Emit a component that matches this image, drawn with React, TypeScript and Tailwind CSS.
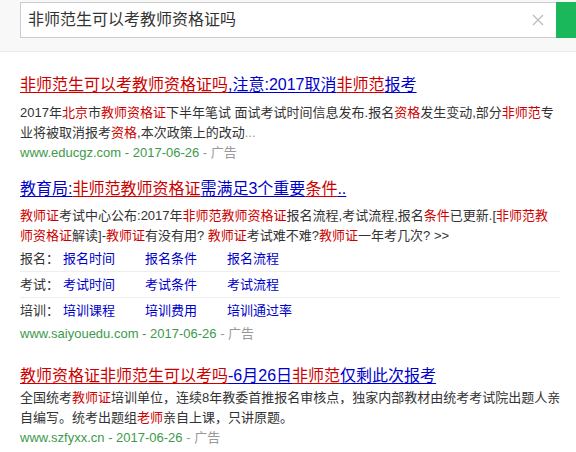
import React from "react";

type Seg = [string, "r" | "b" | "t" | "g"];

const colorOf: Record<Seg[1], string> = {
  r: "text-[#cc0000]",
  b: "text-[#0000cc]",
  t: "text-[#333333]",
  g: "text-[#999999]",
};

function Segs({ segs, underline }: { segs: Seg[]; underline?: boolean }) {
  return (
    <>
      {segs.map(([s, c], i) => (
        <span key={i} className={`${colorOf[c]} ${underline ? "underline underline-offset-2" : ""}`}>
          {s}
        </span>
      ))}
    </>
  );
}

function Cite({ host }: { host: string }) {
  return (
    <div className="text-[13px] leading-5">
      <span className="text-[#3d9a4a]">{host} - 2017-06-26</span>
      <span className="text-[#999999]"> - 广告</span>
    </div>
  );
}

const rows = [
  { label: "报名：", links: ["报名时间", "报名条件", "报名流程"] },
  { label: "考试：", links: ["考试时间", "考试条件", "考试流程"] },
  { label: "培训：", links: ["培训课程", "培训费用", "培训通过率"] },
];

export default function App() {
  return (
    <div
      className="w-[576px] h-[452px] overflow-hidden bg-white"
      style={{ fontFamily: '"Liberation Sans", "Noto Sans CJK SC", sans-serif' }}
    >
      {/* search header */}
      <div className="h-[52px] bg-[#f8f8f8] border-b border-[#ececec] pt-[2px] pl-[20px] flex">
        <div className="w-[540px] h-[36px] bg-white border border-[#cccccc] border-r-0 flex items-center pl-[7px] pr-[12px]">
          <span className="flex-1 text-[16px] text-[#333333] leading-none">非师范生可以考教师资格证吗</span>
          <svg width="12" height="12" viewBox="0 0 12 12">
            <path d="M1 1 L11 11 M11 1 L1 11" stroke="#bbbbbb" strokeWidth="1.2" />
          </svg>
        </div>
        <div className="w-[20px] h-[36px] bg-[#1ab85a]" />
      </div>

      <div className="px-[20px] pt-[22px] w-[581px]">
        {/* result 1 */}
        <div>
          <div className="text-[16px] leading-[22px] whitespace-nowrap">
            <Segs
              underline
              segs={[
                ["非师范生可以考教师资格证吗", "r"],
                [",注意:2017取消", "b"],
                ["非师范", "r"],
                ["报考", "b"],
              ]}
            />
          </div>
          <div className="mt-[7px] text-[13px] leading-5 w-[541px]">
            <Segs
              segs={[
                ["2017年", "t"],
                ["北京", "r"],
                ["市", "t"],
                ["教师资格证", "r"],
                ["下半年笔试 面试考试时间信息发布.报名", "t"],
                ["资格", "r"],
                ["发生变动,部分", "t"],
                ["非师范", "r"],
                ["专", "t"],
              ]}
            />
            <br />
            <Segs
              segs={[
                ["业将被取消报考", "t"],
                ["资格", "r"],
                [",本次政策上的改动", "t"],
                ["...", "g"],
              ]}
            />
          </div>
          <Cite host="www.educgz.com" />
        </div>

        {/* result 2 */}
        <div className="mt-[15px]">
          <div className="text-[16px] leading-[22px] whitespace-nowrap">
            <Segs
              underline
              segs={[
                ["教育局:", "b"],
                ["非师范教师资格证", "r"],
                ["需满足3个重要", "b"],
                ["条件", "r"],
                ["..", "b"],
              ]}
            />
          </div>
          <div className="mt-[6px] text-[13px] leading-5 w-[541px]">
            <Segs
              segs={[
                ["教师证", "r"],
                ["考试中心公布:2017年", "t"],
                ["非师范教师资格证", "r"],
                ["报名流程,考试流程,报名", "t"],
                ["条件", "r"],
                ["已更新.[", "t"],
                ["非师范教", "r"],
              ]}
            />
            <br />
            <Segs
              segs={[
                ["师资格证", "r"],
                ["解读]-", "t"],
                ["教师证", "r"],
                ["有没有用? ", "t"],
                ["教师证", "r"],
                ["考试难不难?", "t"],
                ["教师证", "r"],
                ["一年考几次? >>", "t"],
              ]}
            />
          </div>
          <div className="w-[540px]">
            {rows.map((r, i) => (
              <div
                key={r.label}
                className={`flex items-center h-[26px] text-[13px] ${i < 2 ? "border-b border-[#eeeeee]" : ""}`}
              >
                <span className="w-[43px] text-[#333333]">{r.label}</span>
                {r.links.map((l) => (
                  <span key={l} className="w-[82px] text-[#0000cc]">
                    {l}
                  </span>
                ))}
              </div>
            ))}
          </div>
          <Cite host="www.saiyouedu.com" />
        </div>

        {/* result 3 */}
        <div className="mt-[21px]">
          <div className="text-[16px] leading-[22px] whitespace-nowrap">
            <Segs
              underline
              segs={[
                ["教师资格证非师范生可以考吗", "r"],
                ["-6月26日", "b"],
                ["非师范", "r"],
                ["仅剩此次报考", "b"],
              ]}
            />
          </div>
          <div className="mt-[1px] text-[13px] leading-5 w-[541px]">
            <Segs
              segs={[
                ["全国统考", "t"],
                ["教师证", "r"],
                ["培训单位，连续8年教委首推报名审核点，独家内部教材由统考考试院出题人亲", "t"],
              ]}
            />
            <br />
            <Segs
              segs={[
                ["自编写。统考出题组", "t"],
                ["老师", "r"],
                ["亲自上课，只讲原题。", "t"],
              ]}
            />
          </div>
          <Cite host="www.szfyxx.cn" />
        </div>
      </div>
    </div>
  );
}
